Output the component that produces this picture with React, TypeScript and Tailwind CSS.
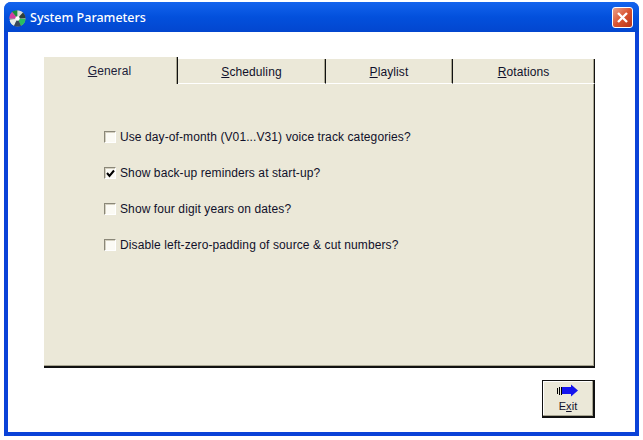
const options = [
  { id: 'dom', before: 'Use day-of-month (V01...V31) voice track categories?', checked: false },
  { id: 'backup', before: 'Show back-up reminders at start-up?', checked: true },
  { id: 'years', before: 'Show four digit years on dates?', checked: false },
  { id: 'padding', before: 'Disable left-zero-padding of source & cut numbers?', checked: false },
];

const tabs = [
  { key: 'S', rest: 'cheduling', width: 'w-[148px]' },
  { key: 'P', rest: 'laylist', width: 'w-[127px]' },
  { key: 'R', rest: 'otations', width: 'w-[142px]' },
];

function DiscIcon() {
  return (
    <svg width="17" height="17" viewBox="0 0 17 17">
      <circle cx="8.5" cy="8.5" r="8" fill="#9aa5a0" />
      <path d="M8.5 8.5 L3 1.8 A8 8 0 0 1 8.5 .5 Z" fill="#1f8f3a" />
      <path d="M8.5 8.5 L8.5 .5 A8 8 0 0 1 14 2.5 Z" fill="#d8dcd8" />
      <path d="M8.5 8.5 L14 2.5 A8 8 0 0 1 16.5 8 Z" fill="#2f3f3a" />
      <path d="M8.5 8.5 L.5 8.5 A8 8 0 0 1 3 2 Z" fill="#d23fa0" />
      <path d="M8.5 8.5 L.6 10 A8 8 0 0 0 5 15.7 Z" fill="#e8ece8" />
      <path d="M8.5 8.5 L16.5 9 A8 8 0 0 1 12 15.7 Z" fill="#28c060" />
      <path d="M8.5 8.5 L12 15.7 A8 8 0 0 1 5 15.7 Z" fill="#38485a" />
      <circle cx="8.5" cy="8.5" r="2.2" fill="#ffffff" />
    </svg>
  );
}

function CloseButton() {
  return (
    <div className="flex h-[21px] w-[21px] items-center justify-center rounded-[3px] border border-white bg-gradient-to-br from-[#e8a08a] via-[#d9532f] to-[#b8341a]">
      <svg width="13" height="13" viewBox="0 0 13 13">
        <path d="M2 2 L11 11 M11 2 L2 11" stroke="#ffffff" strokeWidth="2.4" />
      </svg>
    </div>
  );
}

function ExitArrow() {
  return (
    <svg width="22" height="13" viewBox="0 0 22 13">
      <path d="M.5 4v6M2.5 3v8M4.5 3v8" stroke="#000000" strokeWidth="1" />
      <path d="M5 3 H14 V.5 L21 6.5 L14 12.5 V10 H5 Z" fill="#1414ee" />
    </svg>
  );
}

function Checkbox({ checked }: { checked: boolean }) {
  return (
    <div className="flex h-[12px] w-[12px] shrink-0 items-center justify-center border-t border-l border-t-[#8a8778] border-l-[#8a8778] border-r border-b border-r-[#ffffff] border-b-[#ffffff] bg-[#fbfaf4] shadow-[inset_1px_1px_0_#d4d0c0]">
      {checked && (
        <svg width="9" height="9" viewBox="0 0 9 9">
          <path d="M1 4 L3.5 7 L8 1.5" fill="none" stroke="#000000" strokeWidth="2" />
        </svg>
      )}
    </div>
  );
}

export default function App() {
  return (
    <div className="h-[440px] w-[643px] overflow-hidden bg-white pt-[2px] pr-[4px] pb-[4px] pl-[4px] font-['Liberation_Sans',Arial,sans-serif] text-[12px] tracking-[0.1px] text-[#10102a]">
      <div className="flex h-[434px] w-[635px] flex-col overflow-hidden rounded-t-[7px] bg-[#0a42d8]">
        <div className="flex h-[30px] shrink-0 items-center justify-between bg-gradient-to-b from-[#1464ee] via-[#0350dc] to-[#0346cf] pr-[6px] pl-[5px]">
          <div className="mt-[2px] flex items-center gap-[4px]">
            <DiscIcon />
            <span className="mt-[1px] font-['Noto_Sans',sans-serif] text-[12.5px] font-medium tracking-normal text-white">System Parameters</span>
          </div>
          <CloseButton />
        </div>

        <div className="mx-[4px] mb-[4px] flex flex-1 flex-col bg-white pt-[25px] pr-[40px] pl-[36px]">
          <div className="flex h-[311px] flex-col">
            <div className="flex h-[27px] shrink-0 items-end">
              <div className="flex h-[27px] w-[134px] justify-center border-r border-r-[#111111] bg-[#ebe8d8] pt-[5px] pr-[2px] text-[#20203a] shadow-[inset_-1px_0_0_#a8a590]">
                <span><span className="underline">G</span>eneral</span>
              </div>
              {tabs.map((tab) => (
                <div
                  key={tab.key}
                  className={`flex h-[25px] ${tab.width} justify-center border-r border-b border-r-[#111111] border-b-white bg-[#ebe8d8] pt-[4px] shadow-[inset_-1px_0_0_#a8a590]`}
                >
                  <span><span className="underline">{tab.key}</span>{tab.rest}</span>
                </div>
              ))}
            </div>

            <div className="flex flex-1 flex-col gap-[22px] border-r border-b-[2px] border-r-[#111111] border-b-[#111111] bg-[#ebe8d8] pt-[46px] pl-[60px] shadow-[inset_-1px_-1px_0_#a8a590]">
              {options.map((option) => (
                <label key={option.id} className="flex h-[14px] items-center gap-[4px]">
                  <Checkbox checked={option.checked} />
                  <span>{option.before}</span>
                </label>
              ))}
            </div>
          </div>

          <div className="mt-[12px] flex justify-end">
            <button className="flex h-[38px] w-[53px] flex-col items-center border-t border-l border-t-[#111111] border-l-[#111111] border-r-[2px] border-b-[2px] border-r-[#111111] border-b-[#111111] bg-[#ebe8d8] pt-[3px] shadow-[inset_-1px_-1px_0_#a8a590,inset_1px_1px_0_#ffffff] text-[11px]">
              <ExitArrow />
              <span className="mt-[1px]">E<span className="underline">x</span>it</span>
            </button>
          </div>
        </div>
      </div>
    </div>
  );
}
